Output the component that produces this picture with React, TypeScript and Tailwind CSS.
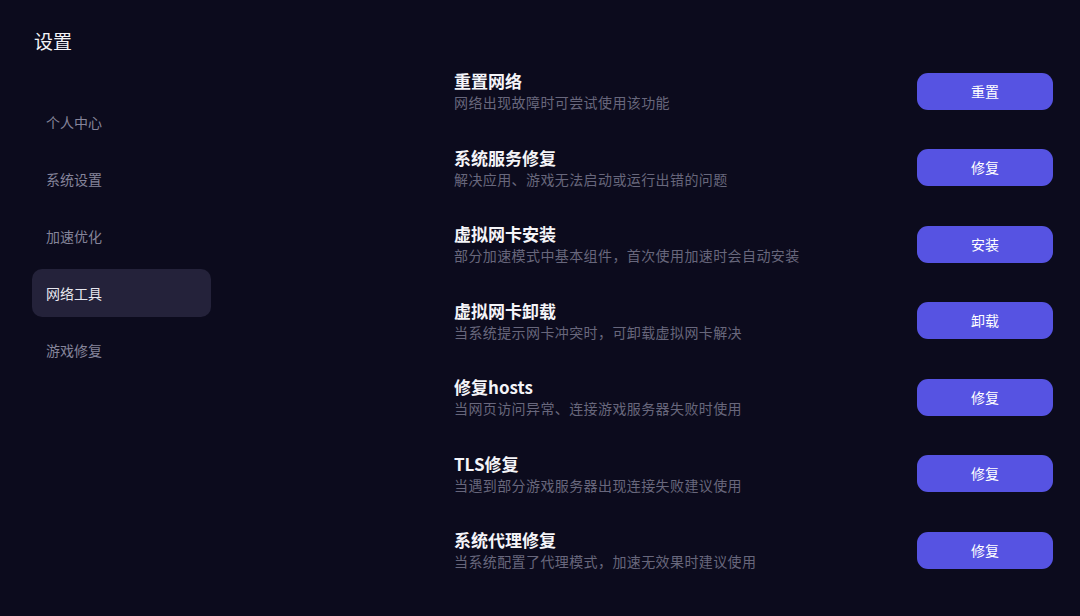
const menu = ["个人中心", "系统设置", "加速优化", "网络工具", "游戏修复"];

const tools = [
  { title: "重置网络", desc: "网络出现故障时可尝试使用该功能", action: "重置" },
  { title: "系统服务修复", desc: "解决应用、游戏无法启动或运行出错的问题", action: "修复" },
  { title: "虚拟网卡安装", desc: "部分加速模式中基本组件，首次使用加速时会自动安装", action: "安装" },
  { title: "虚拟网卡卸载", desc: "当系统提示网卡冲突时，可卸载虚拟网卡解决", action: "卸载" },
  { title: "修复hosts", desc: "当网页访问异常、连接游戏服务器失败时使用", action: "修复" },
  { title: "TLS修复", desc: "当遇到部分游戏服务器出现连接失败建议使用", action: "修复" },
  { title: "系统代理修复", desc: "当系统配置了代理模式，加速无效果时建议使用", action: "修复" },
];

export default function App() {
  const active = "网络工具";
  return (
    <div
      className="flex h-[616px] w-[1080px] overflow-hidden bg-[#0c0b1d] text-white"
      style={{ fontFamily: '"Noto Sans CJK SC", "Noto Sans", sans-serif' }}
    >
      <aside className="w-[260px] shrink-0 pl-8">
        <h1 className="mt-[29px] pl-[2px] text-[19px] leading-6 text-[#f2f2f6]">设置</h1>
        <nav className="mt-[45px] flex w-[179px] flex-col gap-[9px]">
          {menu.map((m) => (
            <div
              key={m}
              className={
                m === active
                  ? "flex h-12 items-center rounded-[10px] bg-[#24223a] pl-[14px] text-[14px] text-[#e6e6ee]"
                  : "flex h-12 items-center rounded-[10px] pl-[14px] text-[14px] text-[#85849a]"
              }
            >
              {m}
            </div>
          ))}
        </nav>
      </aside>

      <main className="flex-1 pl-[194px] pr-[27px] pt-[53px]">
        {tools.map((t) => (
          <div key={t.title} className="flex h-[76.5px] items-center justify-between">
            <div>
              <p className="text-[17px] font-bold leading-[22px] text-[#f4f4f8]">{t.title}</p>
              <p className="text-[14px] leading-5 tracking-[0.4px] text-[#68677c]">{t.desc}</p>
            </div>
            <button className="h-[37px] w-[136px] rounded-[11px] bg-[#5653e2] text-[14px] text-white">
              {t.action}
            </button>
          </div>
        ))}
      </main>
    </div>
  );
}
